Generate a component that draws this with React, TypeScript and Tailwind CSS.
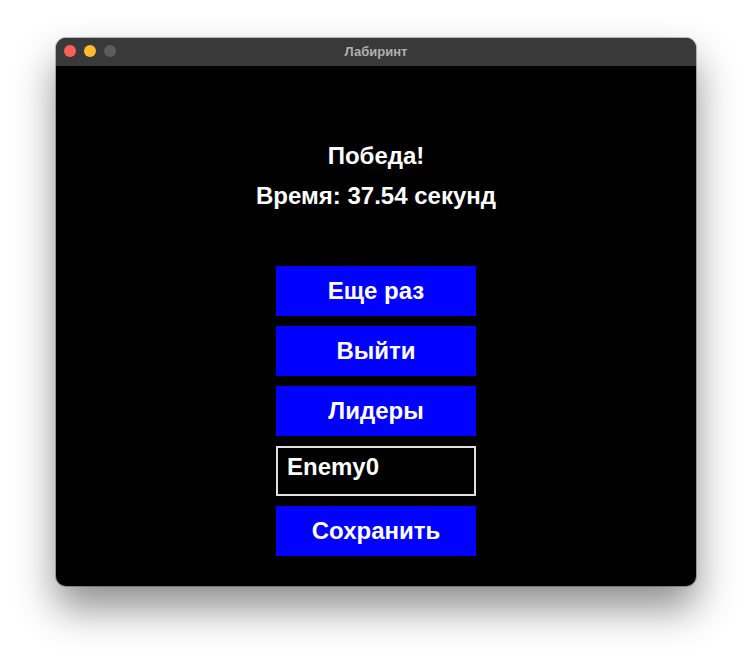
const FONT = "font-['Liberation_Sans',Arial,sans-serif]";

function Button({ label }: { label: string }) {
  return (
    <div className="flex h-[50px] w-[200px] items-center justify-center bg-[#0000ff] text-[24px] font-bold text-white">
      {label}
    </div>
  );
}

export default function App() {
  return (
    <div className={`flex h-[660px] w-[752px] items-start justify-center bg-white pt-[38px] ${FONT}`}>
      <div className="flex h-[548px] w-[640px] flex-col overflow-hidden rounded-[10px] bg-black shadow-[0_22px_40px_rgba(0,0,0,0.45),0_0_0_1px_rgba(0,0,0,0.25)]">
        {/* title bar */}
        <div className="relative flex h-[28px] shrink-0 items-center justify-center bg-[#383938]">
          <div className="absolute left-[8px] top-[7px] flex gap-[8px]">
            <span className="h-[12px] w-[12px] rounded-full bg-[#fe5f57]" />
            <span className="h-[12px] w-[12px] rounded-full bg-[#febc2e]" />
            <span className="h-[12px] w-[12px] rounded-full bg-[#5b5c5b]" />
          </div>
          <span className="text-[13px] font-bold text-[#b0b0b0]">Лабиринт</span>
        </div>

        {/* content */}
        <div className="flex flex-1 flex-col items-center pt-[76px] text-white">
          <div className="text-[24px] font-bold leading-[28px]">Победа!</div>
          <div className="mt-[12px] text-[24px] font-bold leading-[28px]">Время: 37.54 секунд</div>
          <div className="mt-[56px] flex flex-col gap-[10px]">
            <Button label="Еще раз" />
            <Button label="Выйти" />
            <Button label="Лидеры" />
            <div className="flex h-[50px] w-[200px] items-start border-2 border-[#e0e0e0] bg-black pl-[9px] pt-[5px] text-[24px] font-bold leading-[28px] text-white">
              Enemy0
            </div>
            <Button label="Сохранить" />
          </div>
        </div>
      </div>
    </div>
  );
}
